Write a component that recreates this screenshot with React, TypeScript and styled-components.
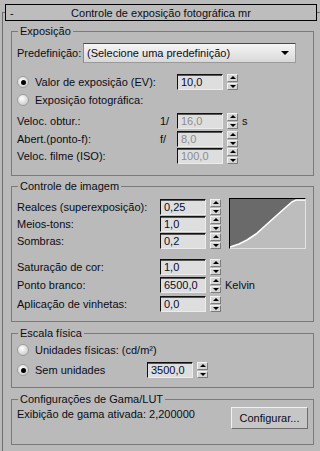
import React from "react";
import styled, { createGlobalStyle, css } from "styled-components";

const Global = createGlobalStyle`
  html, body { margin: 0; padding: 0; background: #bababa; }
  body { font-family: "Liberation Sans", Arial, sans-serif; font-size: 11px; color: #0c0c14; }
  * { box-sizing: border-box; }
`;

const Panel = styled.div`
  width: 320px;
  height: 451px;
  overflow: hidden;
  padding-top: 12px;
  background: #bababa;
`;

const Frame = styled.div`
  margin-left: 2px;
  min-height: 439px;
  border-left: 1px solid #6e6e6e;
  border-top: 1px solid #6e6e6e;
  display: flex;
  flex-direction: column;
`;

const TitleBar = styled.div`
  margin: -9px 3px 0 2px;
  height: 17px;
  border: 1px solid #000;
  background: #bdbdbd;
  display: flex;
  align-items: center;
`;

const Minus = styled.span`
  width: 14px;
  padding-left: 4px;
  line-height: 14px;
`;

const Title = styled.span`
  flex: 1;
  text-align: center;
  padding-right: 14px;
  line-height: 14px;
`;

const Group = styled.div<{ $mt: number; $pt: number; $pb: number }>`
  position: relative;
  margin: ${(p) => p.$mt}px 6px 0 8px;
  border: 1px solid #7a7a7a;
  padding: ${(p) => p.$pt}px 5px ${(p) => p.$pb}px 5px;
  display: flex;
  flex-direction: column;
`;

const Legend = styled.span`
  position: absolute;
  top: -8px;
  left: 6px;
  padding: 0 2px;
  background: #bababa;
  line-height: 14px;
`;

const Row = styled.div<{ $mt?: number; $h?: number }>`
  display: flex;
  align-items: center;
  height: ${(p) => p.$h ?? 16}px;
  margin-top: ${(p) => p.$mt ?? 0}px;
  white-space: nowrap;
`;

const Label = styled.span<{ $w: number }>`
  flex: none;
  width: ${(p) => p.$w}px;
  display: flex;
  align-items: center;
  white-space: nowrap;
`;

const Prefix = styled.span`
  flex: none;
  width: 17px;
`;

const Suffix = styled.span`
  margin-left: 4px;
`;

const InputBox = styled.div<{ $w: number; $disabled?: boolean }>`
  flex: none;
  width: ${(p) => p.$w}px;
  height: 16px;
  background: #dedede;
  border: 1px solid;
  border-color: #111 #ececec #ececec #111;
  box-shadow: inset 0 1px 0 #555;
  padding: 1px 0 0 3px;
  line-height: 13px;
  color: ${(p) => (p.$disabled ? "#8c8c8c" : "#0a0a30")};
`;

const SpinBtns = styled.div`
  flex: none;
  margin-left: 4px;
  width: 11px;
  height: 16px;
  display: flex;
  flex-direction: column;
  gap: 1px;
`;

const SpinBtn = styled.div<{ $down?: boolean }>`
  flex: 1;
  background: #d6d6d6;
  border: 1px solid;
  border-color: #f2f2f2 #7c7c7c #7c7c7c #f2f2f2;
  display: flex;
  align-items: center;
  justify-content: center;
  &::after {
    content: "";
    width: 0;
    height: 0;
    border-left: 3px solid transparent;
    border-right: 3px solid transparent;
    ${(p) =>
      p.$down
        ? css`border-top: 3px solid #000;`
        : css`border-bottom: 3px solid #000;`}
  }
`;

const Spinner = ({ value, w = 46, disabled }: { value: string; w?: number; disabled?: boolean }) => (
  <>
    <InputBox $w={w} $disabled={disabled}>{value}</InputBox>
    <SpinBtns>
      <SpinBtn />
      <SpinBtn $down />
    </SpinBtns>
  </>
);

const Select = styled.div`
  flex: 1;
  height: 20px;
  margin-right: 12px;
  border: 1px solid;
  border-color: #4a4a4a #9a9a9a #9a9a9a #8a8a8a;
  background: linear-gradient(#f6f6f6, #d8d8d8);
  display: flex;
  align-items: center;
  padding-left: 3px;
  justify-content: space-between;
  &::after {
    content: "";
    margin-right: 6px;
    border-left: 4px solid transparent;
    border-right: 4px solid transparent;
    border-top: 4px solid #000;
  }
`;

const Radio = styled.span<{ $on?: boolean }>`
  flex: none;
  width: 12px;
  height: 12px;
  border-radius: 50%;
  margin-right: 6px;
  border: 1px solid #9c9c9c;
  background: radial-gradient(circle at 40% 35%, #ffffff, #d2d2d2 70%, #bcbcbc);
  display: flex;
  align-items: center;
  justify-content: center;
  &::after {
    content: "";
    width: 5px;
    height: 5px;
    border-radius: 50%;
    background: ${(p) => (p.$on ? "#000" : "transparent")};
  }
`;

const CurveBlock = styled.div`
  display: flex;
  align-items: flex-start;
`;

const RowStack = styled.div`
  display: flex;
  flex-direction: column;
  gap: 1px;
  padding-top: 1px;
`;

const Graph = styled.div`
  margin-left: 8px;
  width: 77px;
  height: 51px;
  border: 1px solid;
  border-color: #000 #e2e2e2 #e2e2e2 #000;
  background: #bdbdbd;
  display: flex;
`;

const GammaRow = styled.div`
  display: flex;
  justify-content: space-between;
  align-items: flex-start;
`;

const Text = styled.span`
  line-height: 14px;
`;

const Button = styled.div`
  width: 77px;
  height: 22px;
  border: 1px solid;
  border-color: #f2f2f2 #6e6e6e #6e6e6e #f2f2f2;
  background: #c6c6c6;
  display: flex;
  align-items: center;
  justify-content: center;
`;

const Curve = () => (
  <svg width="75" height="49" viewBox="0 0 75 49">
    <path d="M0 0 H75 V1 H66 L62 3 L55 9 L46 17 L36 26 L26 35 L17 41 L9 45 L3 47 L0 48 Z" fill="#6a6a6a" />
    <path d="M0 48 L3 47 L9 45 L17 41 L26 35 L36 26 L46 17 L55 9 L62 3 L66 1 H75" fill="none" stroke="#fff" strokeWidth="1.6" />
  </svg>
);

export default function App() {
  return (
    <>
      <Global />
      <Panel>
        <Frame>
          <TitleBar>
            <Minus>-</Minus>
            <Title>Controle de exposição fotográfica mr</Title>
          </TitleBar>

          <Group $mt={10} $pt={11} $pb={11}>
            <Legend>Exposição</Legend>
            <Row $h={20}>
              <Label $w={66}>Predefinição:</Label>
              <Select>(Selecione uma predefinição)</Select>
            </Row>
            <Row $mt={11}>
              <Label $w={160}>
                <Radio $on />
                Valor de exposição (EV):
              </Label>
              <Spinner value="10,0" />
            </Row>
            <Row $mt={2}>
              <Label $w={160}>
                <Radio />
                Exposição fotográfica:
              </Label>
            </Row>
            <Row $mt={5}>
              <Label $w={143}>Veloc. obtur.:</Label>
              <Prefix>1/</Prefix>
              <Spinner value="16,0" disabled />
              <Suffix>s</Suffix>
            </Row>
            <Row $mt={2}>
              <Label $w={143}>Abert.(ponto-f):</Label>
              <Prefix>f/</Prefix>
              <Spinner value="8,0" disabled />
            </Row>
            <Row $mt={1}>
              <Label $w={143}>Veloc. filme (ISO):</Label>
              <Prefix />
              <Spinner value="100,0" disabled />
            </Row>
          </Group>

          <Group $mt={10} $pt={11} $pb={9}>
            <Legend>Controle de imagem</Legend>
            <CurveBlock>
              <RowStack>
                <Row>
                  <Label $w={143}>Realces (superexposição):</Label>
                  <Spinner value="0,25" />
                </Row>
                <Row>
                  <Label $w={143}>Meios-tons:</Label>
                  <Spinner value="1,0" />
                </Row>
                <Row>
                  <Label $w={143}>Sombras:</Label>
                  <Spinner value="0,2" />
                </Row>
              </RowStack>
              <Graph>
                <Curve />
              </Graph>
            </CurveBlock>
            <Row $mt={10}>
              <Label $w={143}>Saturação de cor:</Label>
              <Spinner value="1,0" />
            </Row>
            <Row $mt={2}>
              <Label $w={143}>Ponto branco:</Label>
              <Spinner value="6500,0" />
              <Suffix>Kelvin</Suffix>
            </Row>
            <Row $mt={3}>
              <Label $w={143}>Aplicação de vinhetas:</Label>
              <Spinner value="0,0" />
            </Row>
          </Group>

          <Group $mt={11} $pt={8} $pb={9}>
            <Legend>Escala física</Legend>
            <Row>
              <Label $w={200}>
                <Radio />
                Unidades físicas: (cd/m²)
              </Label>
            </Row>
            <Row $mt={4}>
              <Label $w={130}>
                <Radio $on />
                Sem unidades
              </Label>
              <Spinner value="3500,0" />
            </Row>
          </Group>

          <Group $mt={11} $pt={7} $pb={15}>
            <Legend>Configurações de Gama/LUT</Legend>
            <GammaRow>
              <Text>Exibição de gama ativada: 2,200000</Text>
              <Button>Configurar...</Button>
            </GammaRow>
          </Group>
        </Frame>
      </Panel>
    </>
  );
}
